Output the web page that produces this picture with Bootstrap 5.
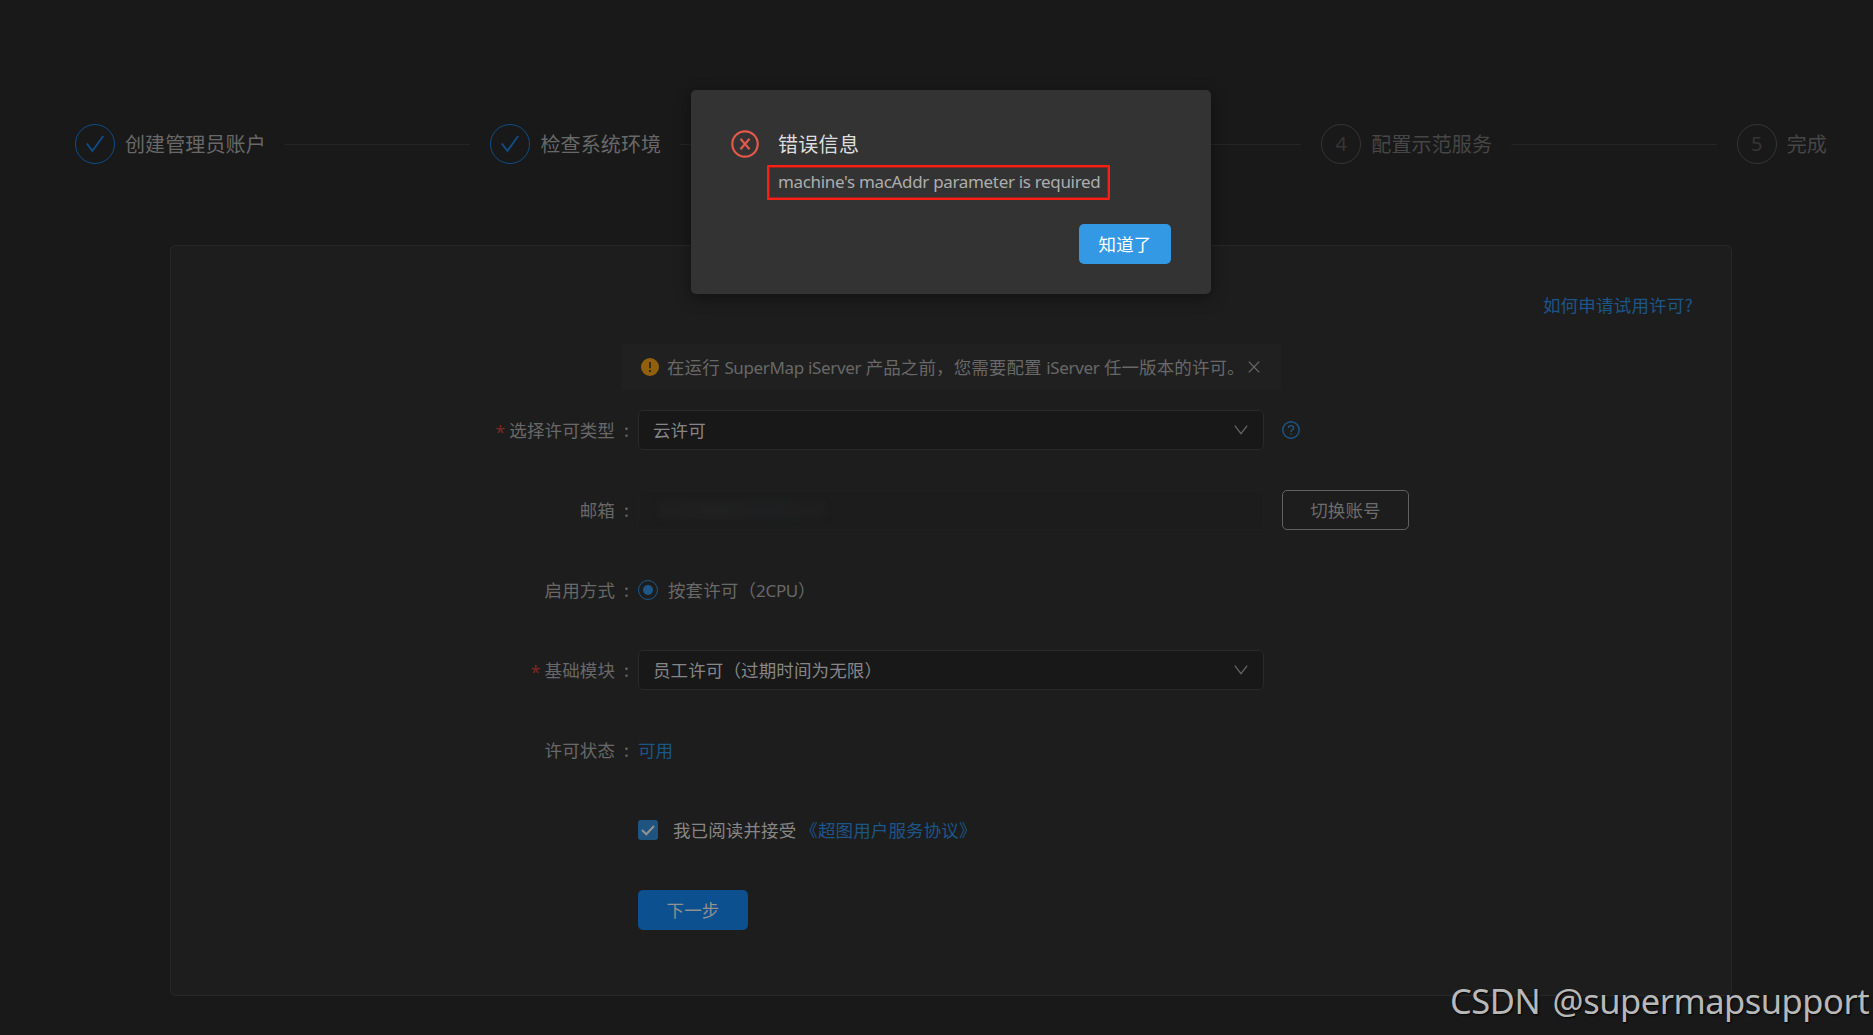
<!DOCTYPE html>
<html lang="zh-CN">
<head>
<meta charset="utf-8">
<meta name="viewport" content="width=device-width, initial-scale=1">
<title>SuperMap iServer</title>
<link href="https://cdn.jsdelivr.net/npm/bootstrap@5.3.0/dist/css/bootstrap.min.css" rel="stylesheet">
<style>
body{background:#191919;color:#686868;font:17.5px/26px "Noto Sans","Noto Sans CJK SC",sans-serif;height:1035px;overflow:hidden;position:relative}
.cjk{font-family:"Noto Sans CJK SC",sans-serif;font-weight:400;letter-spacing:.12px}
.lat{font-family:"Noto Sans",sans-serif;font-size:17px;letter-spacing:-.35px}
a{color:#1c5587;text-decoration:none}
svg{display:block;flex:none}
.wizard{padding:124px 45px 0 75px;height:164px;font-size:20px;line-height:40px}
.stage{width:415.45px;gap:10px}
.stage:last-child{width:auto}
.stage::after{content:"";flex:1;height:1px;background:#252525;margin:1px 20px 0 9px}
.stage:last-child::after{display:none}
.stage .dot{width:40px;height:40px;border:1px solid #0f4d8a;color:#0f4d8a;flex:none}
.stage.todo{color:#464646}
.stage.todo .dot{border-color:#353535;color:#353535}
.panel{width:1562px;height:751px;margin:81px 0 0 170px;background:#1d1d1d;border:1px solid #272727;border-radius:5px;padding-top:46px}
.help-row{padding-right:38px;height:52px}
.help-row a{letter-spacing:.2px}
.notice{width:660px;height:46px;margin:0 0 20px 450px;background:#202020;padding:0 21px 0 20px}
.notice svg:first-child{margin-right:8px}
.notice .cjk{letter-spacing:.1px}
.line{height:40px;margin-bottom:40px}
.line .cap{width:467px;flex:none;color:#686868}
.line .cap::after{content:":";margin:0 9px 0 9px}
.line .cap.need::before{content:"*";color:#7c2723;margin-right:4px;font-family:"Noto Sans",sans-serif;position:relative;top:2px}
.box{width:626px;height:40px;border:1px solid #2a2a2a;border-radius:5px;background:#181818;color:#868686;padding:0 15px 0 14px;margin-right:18px}
.box.off{background:#1c1c1c;border-color:#1f1f1f}
.smudge{width:168px;height:18px;background:linear-gradient(90deg,#1f1f1f,#202020 35%,#1e1f20 65%,#1e1e1e);filter:blur(2px);margin-left:5px}
.btn{border-radius:5px;height:40px;padding:0;font-size:17.5px;line-height:38px}
.btn-swap{width:127px;border:1px solid #616161;color:#6c6c6c}
.btn-next{width:110px;background:#0c5090;color:#919191;border:0}
.ring{width:20px;height:20px;border:1px solid #1c5787;margin-right:10px}
.ring i{width:10px;height:10px;background:#1c5787}
.agree{padding-left:467px}
.accept{color:#868686;margin-right:4px}
.tick{width:20px;height:20px;background:#1e547f;border-radius:3px;margin-right:15px}
.dialog-box{position:absolute;left:691px;top:90px;width:520px;height:204px;background:#333;border-radius:5px;box-shadow:0 4px 16px rgba(0,0,0,.4);padding:40px 40px 30px}
.dialog-text{margin-left:19px}
.dialog-box h1{font-size:20px;line-height:28px;margin:0;color:#dedede;font-weight:400;letter-spacing:.3px}
.msg{margin:7px 0 0 -11px;width:343px;height:35px;border:2px solid #fa1e14;color:#adadad;line-height:29px;padding-left:9px;white-space:nowrap;border-radius:1px;box-shadow:inset 0 0 0 1px #8a2722}
.msg .lat{letter-spacing:-.33px}
.btn-ok{width:92px;background:#3399e5;color:#fff;border:0;margin-top:24px}
.stamp{position:absolute;left:1450px;top:974px;font-size:34.5px;letter-spacing:-.5px;word-spacing:4px;line-height:54px;color:#b8b8b8;white-space:nowrap;text-shadow:1px 1px 2px #000}
</style>
</head>
<body>
<header class="wizard d-flex">
  <div class="stage d-flex align-items-center"><span class="dot rounded-circle d-flex align-items-center justify-content-center"><svg width="18" height="18" viewBox="0 0 18 18" fill="none" stroke="currentColor" stroke-width="1.9"><path d="M.8 8.5 6.4 16 17.2 1"/></svg></span><span class="cjk">创建管理员账户</span></div>
  <div class="stage d-flex align-items-center"><span class="dot rounded-circle d-flex align-items-center justify-content-center"><svg width="18" height="18" viewBox="0 0 18 18" fill="none" stroke="currentColor" stroke-width="1.9"><path d="M.8 8.5 6.4 16 17.2 1"/></svg></span><span class="cjk">检查系统环境</span></div>
  <div class="stage d-flex align-items-center"><span class="dot rounded-circle d-flex align-items-center justify-content-center">3</span><span class="cjk">配置许可</span></div>
  <div class="stage todo d-flex align-items-center"><span class="dot rounded-circle d-flex align-items-center justify-content-center">4</span><span class="cjk">配置示范服务</span></div>
  <div class="stage todo d-flex align-items-center"><span class="dot rounded-circle d-flex align-items-center justify-content-center">5</span><span class="cjk">完成</span></div>
</header>
<main class="panel">
  <div class="help-row text-end"><a href="#" class="cjk">如何申请试用许可?</a></div>
  <div class="notice d-flex align-items-center">
    <svg width="18" height="18" viewBox="0 0 18 18"><circle cx="9" cy="9" r="9" fill="#91600d"/><path d="M9 4v6.2" stroke="#251c0b" stroke-width="1.6"/><circle cx="9" cy="13" r="1.1" fill="#251c0b"/></svg>
    <span class="flex-grow-1 text-nowrap"><span class="cjk">在运行</span> <span class="lat">SuperMap iServer</span> <span class="cjk">产品之前，您需要配置</span> <span class="lat">iServer</span> <span class="cjk">任一版本的许可。</span></span>
    <svg width="12" height="12" viewBox="0 0 12 12" stroke="#6c6c6c" stroke-width="1.2"><path d="m.8.6 10.4 10.8M11.2.6.8 11.4"/></svg>
  </div>
  <div class="line d-flex align-items-center">
    <label class="cap need text-end cjk">选择许可类型</label>
    <div class="box d-flex align-items-center justify-content-between"><span class="cjk">云许可</span><svg width="14" height="10" viewBox="0 0 14 10" fill="none" stroke="#646464" stroke-width="1.3"><path d="m.8.6 6.2 8 6.2-8"/></svg></div>
    <svg width="18" height="18" viewBox="0 0 18 18" fill="none" stroke="#1c5787" stroke-width="1.4"><circle cx="9" cy="9" r="8.2"/><path d="M6.4 7.1C6.4 5.5 7.5 4.6 9 4.6s2.6.9 2.6 2.3c0 1.9-2.6 1.8-2.6 4"/><path d="M9 12.2v1.4"/></svg>
  </div>
  <div class="line d-flex align-items-center">
    <label class="cap text-end cjk">邮箱</label>
    <div class="box off d-flex align-items-center"><span class="smudge"></span></div>
    <button class="btn btn-swap cjk">切换账号</button>
  </div>
  <div class="line d-flex align-items-center">
    <label class="cap text-end cjk">启用方式</label>
    <span class="ring rounded-circle d-flex align-items-center justify-content-center"><i class="rounded-circle"></i></span><span class="cjk">按套许可（<span class="lat">2CPU</span>）</span>
  </div>
  <div class="line d-flex align-items-center">
    <label class="cap need text-end cjk">基础模块</label>
    <div class="box d-flex align-items-center justify-content-between"><span class="cjk">员工许可（过期时间为无限）</span><svg width="14" height="10" viewBox="0 0 14 10" fill="none" stroke="#646464" stroke-width="1.3"><path d="m.8.6 6.2 8 6.2-8"/></svg></div>
  </div>
  <div class="line d-flex align-items-center">
    <label class="cap text-end cjk">许可状态</label><a href="#" class="cjk">可用</a>
  </div>
  <div class="line d-flex align-items-center agree">
    <span class="tick d-flex align-items-center justify-content-center"><svg width="14" height="11" viewBox="0 0 14 11" fill="none" stroke="#929292" stroke-width="2"><path d="m1 5 4.3 4.3L13 1"/></svg></span>
    <span class="cjk accept">我已阅读并接受</span><a href="#" class="cjk">《超图用户服务协议》</a>
  </div>
  <div class="line agree"><button class="btn btn-next cjk">下一步</button></div>
</main>
<section class="dialog-box" role="dialog">
  <div class="d-flex">
    <svg width="28" height="28" viewBox="0 0 28 28" fill="none" stroke="#e4584b" stroke-width="2.2"><circle cx="14" cy="14" r="12.7"/><path d="m9.5 8.8 9 10.4M18.5 8.8l-9 10.4"/></svg>
    <div class="dialog-text"><h1 class="cjk">错误信息</h1><div class="msg"><span class="lat">machine's macAddr parameter is required</span></div></div>
  </div>
  <div class="text-end"><button class="btn btn-ok cjk">知道了</button></div>
</section>
<div class="stamp">CSDN @supermapsupport</div>
<script src="https://cdn.jsdelivr.net/npm/bootstrap@5.3.0/dist/js/bootstrap.bundle.min.js"></script>
</body>
</html>
